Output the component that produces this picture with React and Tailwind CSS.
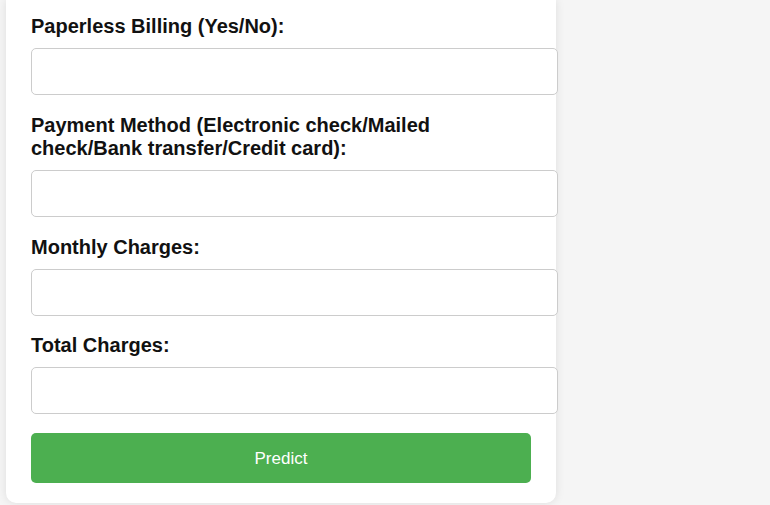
import React from "react";

const fields = [
  { label: "Paperless Billing (Yes/No):", mb: "mb-[19px]" },
  { label: "Payment Method (Electronic check/Mailed check/Bank transfer/Credit card):", mb: "mb-[19px]" },
  { label: "Monthly Charges:", mb: "mb-[18px]" },
  { label: "Total Charges:", mb: "mb-[19px]" },
];

export default function App() {
  return (
    <div
      className="w-[770px] h-[505px] overflow-hidden bg-[#f5f5f5] pl-[6px]"
      style={{ fontFamily: '"Liberation Sans", Arial, sans-serif' }}
    >
      <div className="w-[550px] bg-white rounded-b-[10px] shadow-[0_0_10px_rgba(0,0,0,0.1)] pl-[25px] pt-[15px] pb-[20px]">
        {fields.map((f, i) => (
          <div key={i}>
            <label className="block w-[500px] text-[20px] leading-[23px] font-bold text-[#111] mb-[10px]">
              {f.label}
            </label>
            <input
              type="text"
              className={
                "block w-[527px] h-[47px] border border-[#ccc] rounded-[5px] bg-white px-[12px] text-[18px] outline-none " +
                f.mb
              }
            />
          </div>
        ))}
        <button className="block w-[500px] h-[50px] rounded-[5px] bg-[#4caf50] text-white text-[17px] leading-none">
          Predict
        </button>
      </div>
    </div>
  );
}
